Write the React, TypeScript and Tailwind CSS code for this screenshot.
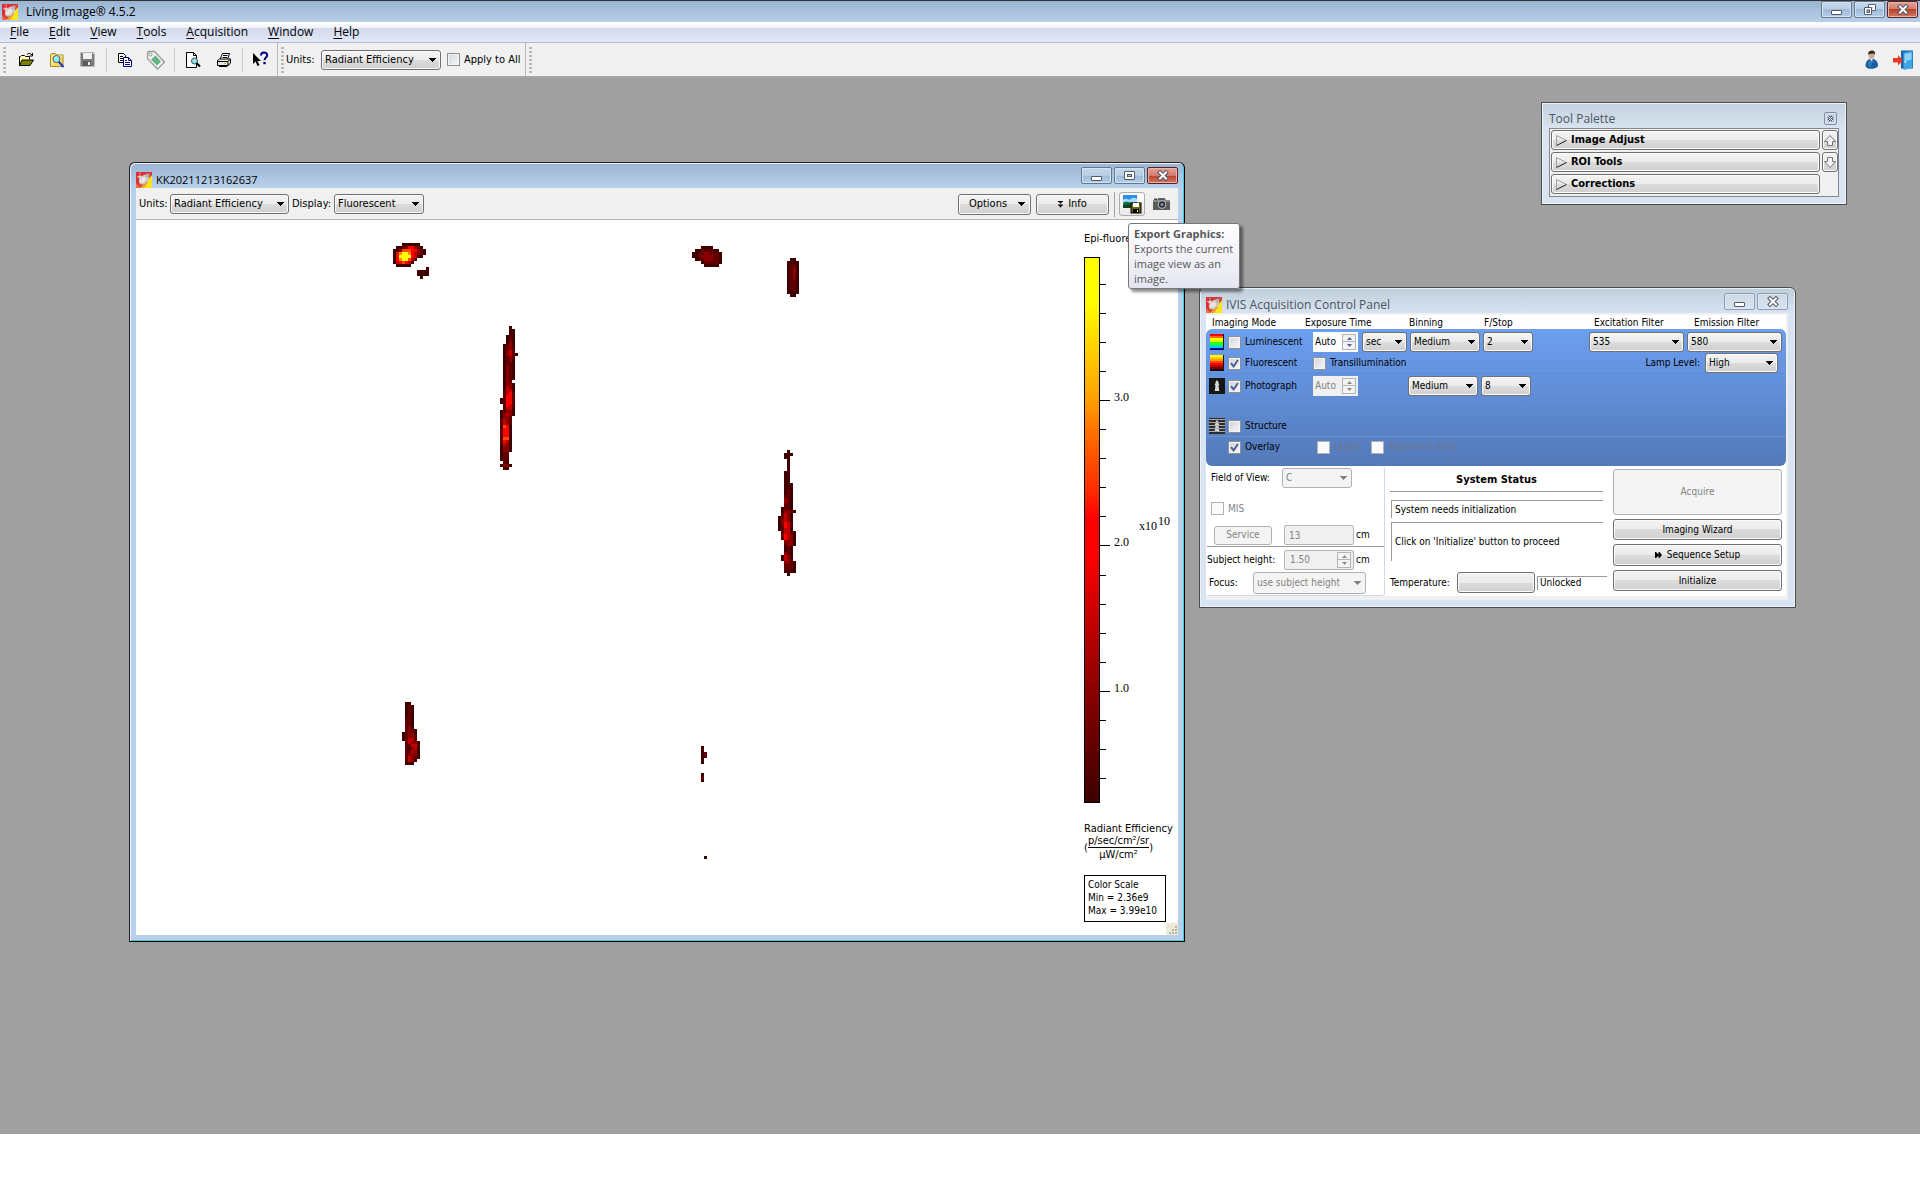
import React, { useId, useState } from 'react';

const UI = "font-['DejaVu_Sans_Condensed','DejaVu_Sans',sans-serif] text-[10px] leading-[12px]";
const TITLE = "font-['Open_Sans','Noto_Sans',sans-serif]";
const FACE =
  'rounded-[3px] border border-[#707070] bg-[linear-gradient(#f3f3f3,#ebebeb_50%,#dcdcdc_50%,#cfcfcf)] shadow-[inset_0_0_0_1px_#fbfbfb]';
const FACE_OFF = 'rounded-[3px] border border-[#adb2b5] bg-[#f4f4f4] text-[#838383]';

/* ---------- controls ---------- */

function Select({
  label,
  options,
  width,
  height = 'h-[20px]',
  disabled,
}: {
  label: string;
  options: string[];
  width: string;
  height?: string;
  disabled?: boolean;
}) {
  return (
    <span className={`relative block shrink-0 ${width} ${height}`}>
      <select
        aria-label={label}
        disabled={disabled}
        className={`block h-full w-full appearance-none pl-[3px] pr-4 opacity-100 ${disabled ? FACE_OFF : `${FACE} text-black`}`}
      >
        {options.map((o) => (
          <option key={o}>{o}</option>
        ))}
      </select>
      <svg
        className="pointer-events-none absolute right-[5px] top-1/2 -mt-[2px]"
        width="7"
        height="4"
        viewBox="0 0 7 4"
        shapeRendering="crispEdges"
      >
        <path d="M0 0h7v1h-1v1h-1v1h-1v1h-1v-1h-1v-1h-1v-1h-1z" fill={disabled ? '#838383' : '#000'} />
      </svg>
    </span>
  );
}

function Check({
  label,
  checked = false,
  disabled,
  faint,
}: {
  label: string;
  checked?: boolean;
  disabled?: boolean;
  faint?: boolean;
}) {
  const id = useId();
  const [on, setOn] = useState(checked);
  return (
    <span className="flex items-center gap-[4px]">
      <span className="relative block size-[13px]">
        <input
          id={id}
          type="checkbox"
          checked={on}
          disabled={disabled}
          onChange={() => setOn(!on)}
          className={`block size-[13px] appearance-none border ${
            disabled
              ? 'border-[#b1b1b1] bg-[#fbfbfb]'
              : 'border-[#8e8f8f] bg-[linear-gradient(135deg,#cfd3d9,#f8f8f8)] shadow-[inset_0_0_0_1px_#f4f4f4]'
          }`}
        />
        {on && (
          <svg className="pointer-events-none absolute left-[2px] top-[2px]" width="9" height="9" viewBox="0 0 9 9">
            <path d="M1 4.2L3.6 7.4L8 1" fill="none" stroke="#4b5f97" strokeWidth="1.9" />
          </svg>
        )}
      </span>
      <label htmlFor={id} className={faint ? 'text-[#6e7689]' : disabled ? 'text-[#838383]' : ''}>
        {label}
      </label>
    </span>
  );
}

function Spin({
  label,
  value,
  width,
  disabled,
  framed,
}: {
  label: string;
  value: string;
  width: string;
  disabled?: boolean;
  framed?: boolean;
}) {
  const mark = disabled ? '#8c8c8c' : '#4a63a5';
  return (
    <span
      className={`flex h-[20px] shrink-0 items-center pr-[2px] ${width} ${
        disabled ? 'bg-[#f0f0f0] text-[#838383]' : 'bg-white text-black'
      } ${framed ? 'rounded-[2px] border border-[#b0b4b8] pl-[3px]' : ''}`}
    >
      <input
        aria-label={label}
        defaultValue={value}
        disabled={disabled}
        className="min-w-0 flex-1 bg-transparent pl-[2px] outline-none"
      />
      <span className="flex w-[14px] flex-col">
        {[0, 1].map((i) => (
          <button
            key={i}
            aria-label={`${label} ${i ? 'down' : 'up'}`}
            disabled={disabled}
            className={`flex h-[8px] items-center justify-center border border-[#b4b4b4] bg-[#f3f3f3] ${i ? 'border-t-0' : ''}`}
          >
            <svg width="5" height="3" viewBox="0 0 5 3">
              <path d={i ? 'M0 0h5L2.5 3z' : 'M0 3h5L2.5 0z'} fill={mark} />
            </svg>
          </button>
        ))}
      </span>
    </span>
  );
}

function PushButton({
  children,
  className,
  disabled,
}: {
  children?: React.ReactNode;
  className: string;
  disabled?: boolean;
}) {
  return (
    <button
      disabled={disabled}
      className={`flex items-center justify-center ${disabled ? FACE_OFF : `${FACE} text-black`} ${className}`}
    >
      {children}
    </button>
  );
}

function CaptionButton({ kind, tone }: { kind: 'min' | 'restore' | 'max' | 'close'; tone: 'blue' | 'pale' | 'red' }) {
  const face =
    tone === 'red'
      ? 'border-[#5a1f25] bg-[linear-gradient(#e3a499,#d17a6b_50%,#bb4027_50%,#cf7a63)] shadow-[inset_0_0_0_1px_#e8b5ab]'
      : tone === 'blue'
        ? 'border-[#63788f] bg-[linear-gradient(#c6d8ea,#b7cde4_50%,#9dbad8_50%,#b5cfe9)] shadow-[inset_0_0_0_1px_#d5e4f3]'
        : 'border-[#8e9db5] bg-[linear-gradient(#ccd8e4,#d8e4f0)] shadow-[inset_0_0_0_1px_#dce7f1]';
  return (
    <button aria-label={kind} className={`flex h-[17px] w-[31px] items-center justify-center rounded-[2px] border ${face}`}>
      <svg width="14" height="13" viewBox="0 0 14 13">
        {kind === 'min' && <rect x="1.5" y="7.5" width="10" height="4" rx="0.5" fill="#fff" stroke="#535666" />}
        {kind === 'max' && (
          <g fill="#fff" stroke="#535666">
            <rect x="1.5" y="2.5" width="10" height="8" rx="0.5" />
            <rect x="4.5" y="5.5" width="4" height="2" fill="#a9c2dd" />
          </g>
        )}
        {kind === 'restore' && (
          <g fill="#fff" stroke="#535666">
            <rect x="5.5" y="1.5" width="7" height="6" rx="0.5" />
            <rect x="8" y="4" width="2" height="1.5" fill="#a9c2dd" stroke="none" />
            <rect x="1.5" y="4.5" width="7" height="7" rx="0.5" />
            <rect x="4" y="7" width="2.5" height="2.5" fill="#a9c2dd" />
          </g>
        )}
        {kind === 'close' && (
          <g fill="none" strokeLinecap="square">
            <path d="M4 3.5L10 9.5M10 3.5L4 9.5" stroke="#535666" strokeWidth="4" />
            <path d="M4 3.5L10 9.5M10 3.5L4 9.5" stroke="#fff" strokeWidth="2" />
          </g>
        )}
      </svg>
    </button>
  );
}

function AppIcon() {
  return (
    <svg width="16" height="16" viewBox="0 0 16 16" className="shrink-0">
      <rect width="16" height="16" fill="#dc2f33" />
      <path d="M16 3V16H4L10 10z" fill="#f9e420" />
      <path d="M0 11L5 16H0z" fill="#ee6a4a" />
      <path d="M5 16L10 10l2 0-4 6z" fill="#f59a2a" />
      <ellipse cx="8" cy="7.500" rx="6" ry="4" transform="rotate(-42 8 7.500)" fill="#cfc7c2" />
      <ellipse cx="7" cy="8" rx="3.500" ry="2.200" transform="rotate(-42 7 8)" fill="#e9e5e2" />
      <circle cx="4" cy="5" r="1.800" fill="#dcd5d1" />
      <circle cx="11.500" cy="3.500" r="2" fill="#b9b0ab" />
      <path d="M12 2.500l3-1.500M10.500 9.500l1.500 1.500M5 12l-1 1.500" stroke="#a59c97" strokeWidth="0.800" />
      <path d="M3 1l2 1M1 4l1 1" stroke="#f3b0a6" strokeWidth="0.800" />
    </svg>
  );
}

/* ---------- main toolbar icons ---------- */

const OpenIcon = () => (
  <svg width="16" height="16" viewBox="0 0 16 16">
    <path d="M1.500 13.500v-9h1l1-1h3l1 1h4v3" fill="#ffffb0" stroke="#000" />
    <path d="M1.500 13.500L4 8h11.500L12 13.500z" fill="#808000" stroke="#000" />
    <path d="M9 2.500c1.500-1.500 3.500-1.500 5 .5M14.500 1v3h-3" fill="none" stroke="#000" />
  </svg>
);
const BrowseIcon = () => (
  <svg width="16" height="16" viewBox="0 0 16 16">
    <path d="M1.500 14.500v-12l1-1h4l1 1.500h6.500v11.500z" fill="#f7dc6a" stroke="#a88a1c" />
    <path d="M3 13.500V4h10" fill="none" stroke="#fff3b5" />
    <path d="M9.500 9.500L14.500 15" stroke="#1b36c9" strokeWidth="2" />
    <circle cx="7.500" cy="7" r="3.500" fill="#8ff2ff" stroke="#5a5a5a" />
  </svg>
);
const SaveIcon = () => (
  <svg width="15" height="15" viewBox="0 0 15 15">
    <rect x="0.500" y="0.500" width="14" height="14" fill="#7c7c7c" />
    <rect x="3" y="1" width="9" height="6" fill="#f0f0f0" />
    <rect x="3" y="9" width="8" height="5" fill="#5c5c5c" />
    <rect x="8" y="10" width="2" height="3" fill="#f0f0f0" />
    <rect x="13" y="1" width="1" height="1" fill="#fff" />
  </svg>
);
const CopyIcon = () => (
  <svg width="16" height="16" viewBox="0 0 16 16">
    <path d="M1.500 1.500h5l2 2v7h-7z" fill="#fff" stroke="#000" />
    <path d="M3 4.500h3M3 6.500h4M3 8.500h3" stroke="#000" />
    <path d="M6.500 5.500h5l3 3v6h-8z" fill="#fff" stroke="#000080" />
    <path d="M11.500 5.500v3h3M8 8.500h2M8 10.500h5M8 12.500h5" stroke="#000080" fill="none" />
  </svg>
);
const TagIcon = () => (
  <svg width="20" height="20" viewBox="0 0 20 20">
    <path d="M1.500 2.500l1-1h6l10 10.500-7 7-10-10.500z" fill="#f3f3f3" stroke="#9a9a9a" strokeWidth="1.300" />
    <circle cx="4.500" cy="4.500" r="1.500" fill="#fff" stroke="#8a8a8a" />
    <path d="M9.500 5.500l5.500 6-4 4-6-6z" fill="#5fb57e" />
  </svg>
);
const PreviewIcon = () => (
  <svg width="16" height="16" viewBox="0 0 16 16">
    <path d="M1.500 .5h7l3 3v12h-10z" fill="#fff" stroke="#000" />
    <path d="M8.500 .5v3h3" fill="none" stroke="#000" />
    <circle cx="9.500" cy="9" r="3" fill="#7fe9f2" stroke="#4a4a4a" />
    <path d="M11.500 11L15 14.500" stroke="#000" strokeWidth="2" />
  </svg>
);
const PrintIcon = () => (
  <svg width="16" height="16" viewBox="0 0 16 16">
    <path d="M4 7.500L6.500 1.500h7L11.500 7.500" fill="#fff" stroke="#000" />
    <path d="M7 3.500h4.500M6.500 5.500h4.500" stroke="#000" />
    <path d="M1.500 8.500l2-1.500h11v4l-2.500 2.500H1.500z" fill="#e8e8e8" stroke="#000" />
    <path d="M1.500 9.500h10.500l2.500-2.500M12 9.500v4M3 14.500h8l2-2" fill="none" stroke="#000" />
    <path d="M8 11.500h2" stroke="#c8b400" />
  </svg>
);
const HelpPointerIcon = () => (
  <svg width="17" height="17" viewBox="0 0 17 17">
    <path d="M1 2v11l2.500-2.500L5.500 15l2-1-2-4H9z" fill="#000" />
    <path d="M9 4.500c0-2 1.300-3 3-3s3.200 1 3.200 2.800c0 2.200-2.700 2.200-2.700 5" fill="none" stroke="#000080" strokeWidth="2" />
    <rect x="11.300" y="11" width="2.400" height="2.200" fill="#000080" />
  </svg>
);
const UserIcon = () => (
  <svg width="16" height="20" viewBox="0 0 16 20">
    <path d="M1.500 16c0-4 2-6.500 4-7h4c2.500.500 4.500 3 4.500 7-1 3-11 4.500-12.500 0z" fill="#1d5f9e" />
    <path d="M4 15c0-3 1-4.500 3-5l4 1c-3 1-4 3-4 7z" fill="#2f7dbd" />
    <ellipse cx="7.500" cy="5" rx="3" ry="4" fill="#caa98d" />
    <path d="M4 4.500c0-3 2-4 4-4 2.500 0 3.500 2 3 4.500l-1-1.500c-2 .3-4 .3-6 1z" fill="#33291f" />
    <path d="M6 9h3l-1.500 2z" fill="#fff" />
  </svg>
);
const DoorIcon = () => (
  <svg width="20" height="20" viewBox="0 0 20 20">
    <path d="M8 .5h12v18h-12z" fill="#1565a8" />
    <path d="M10.500 2.500L19.500 1v17l-9 2z" fill="#3da5e8" />
    <path d="M11.500 4L18.500 2.500v7l-7 2z" fill="#8fd3f7" />
    <circle cx="12.300" cy="12" r="0.900" fill="#e8f4fb" />
    <path d="M0 8h5V5l5 5.500-5 5v-3H0z" fill="#e53a25" />
  </svg>
);

function ToolButton({ label, children }: { label: string; children: React.ReactNode }) {
  return (
    <button aria-label={label} className="flex h-[28px] w-[31px] items-center justify-center">
      {children}
    </button>
  );
}
const Separator = () => <span className="ml-[3px] mr-[2px] h-[24px] w-px bg-[#cdcdcd]" />;
const Handle = () => (
  <span className="h-[27px] w-[3px] shrink-0 bg-[radial-gradient(circle,#b0b0b0_1px,transparent_1.5px)] bg-[length:3px_4px]" />
);

/* ---------- heat map data ---------- */

const HEAT: Record<string, string> = {
  a: '#400000',
  b: '#600000',
  c: '#8a0000',
  d: '#c00000',
  e: '#ff0000',
  f: '#ff4800',
  g: '#ff8c00',
  h: '#ffff00',
};
const CELL = 3;

const SPOTS: { x: number; y: number; rows: string[] }[] = [
  {
    x: 257,
    y: 23,
    rows: ['...aaaaaa', '.aabceecba', 'aacfffeecba', 'aeghhgedcba', 'aehhhhedaa', 'aeghhfdb', 'adefeda', '.aaaaa'],
  },
  { x: 281, y: 47, rows: ['...a', 'aaaa', 'aaaa', '.a'] },
  {
    x: 364,
    y: 106,
    rows: [
      '...a', '...aa', '...aa', '..aba', '..aba', '..aca', '.abca', '.abcb', '.acdb', '.acdba', '.abcb', '.abca',
      '.abba', '.acba', '.acba', '.acba', '.acba', '.acba', '.acb', '.acca', '.adca', '.bdda', '.bdeb', '.beeb',
      'abeeb', 'abeeb', '.bedb', '.bdda', 'abcca', 'acdca', 'accb', 'bdcb', 'bdcb', 'bfea', 'beea', 'beea',
      'beea', 'bffa', 'beda', 'adca', 'acca', 'acca', 'abb', 'abb', 'abb', '.ba', 'acca', '.aa',
    ],
  },
  {
    x: 556,
    y: 26,
    rows: ['...aaaa', '.aabbbbaa', 'aabbccbbba', 'aabccccbba', '.abbcccbba', '...abbbbba', '....aaaaa'],
  },
  {
    x: 651,
    y: 38,
    rows: ['.aa', 'aaaa', 'abba', 'abca', 'abca', 'abca', 'abca', 'abba', 'abba', 'abba', 'abba', 'aaaa', '.aa'],
  },
  {
    x: 642,
    y: 230,
    rows: [
      '...a', '..aaa', '..aa', '...a', '...a', '...a', '...a', '..aa', '..aa', '..aa', '..aa', '..aaa', '..aaa',
      '..aba', '..aba', '..bba', '..cba', '..cba', '..bba', '.abba', '.accba', '.bdca', 'abdca', 'acdca', 'acedb',
      'abedb', 'abdda', '.bddba', '.cedca', '.bedca', '..ccca', '..bcca', '..aba', '..aba', '..cba', '.adca', '.adcb',
      '..ccba', '..bbba', '..bbba', '..aaaa', '...a',
    ],
  },
  {
    x: 266,
    y: 482,
    rows: [
      '.aa', '.aba', '.aba', '.aba', '.aba', '.bba', '.bba', '.bba', '.bca', '.bcba', 'abcca', 'abccb', 'abddb',
      '.bdcca', '.bbddb', '.bacda', '.bbdca', '.bccca', '.bdcba', '.bdca', '.aaa',
    ],
  },
  { x: 565, y: 526, rows: ['a', 'a', 'ab', 'ab', 'a', 'a'] },
  { x: 565, y: 553, rows: ['a', 'b', 'a'] },
  { x: 568, y: 636, rows: ['a'] },
];

function HeatMap() {
  return (
    <svg className="w-[948px] shrink-0" height="700" viewBox="0 0 948 700" shapeRendering="crispEdges" role="img" aria-label="Signal map">
      {SPOTS.map((s) =>
        s.rows.flatMap((row, r) =>
          row
            .split('')
            .map((ch, c) =>
              ch === '.' ? null : (
                <rect
                  key={`${s.x}-${s.y}-${r}-${c}`}
                  x={s.x + c * CELL}
                  y={s.y + r * CELL}
                  width={CELL}
                  height={CELL}
                  fill={HEAT[ch]}
                />
              ),
            ),
        ),
      )}
    </svg>
  );
}

const MINOR = [28, 57, 86, 115, 173, 202, 231, 260, 319, 348, 377, 406, 464, 493, 522];
const MAJOR: [number, string][] = [
  [144, '3.0'],
  [289, '2.0'],
  [435, '1.0'],
];

function ColorBar() {
  return (
    <svg
      width="90"
      height="548"
      viewBox="0 0 90 548"
      className="mt-[11px] block font-['Liberation_Serif',serif] text-[12px]"
      role="img"
      aria-label="Color bar"
    >
      <defs>
        <linearGradient id="scale" x1="0" y1="0" x2="0" y2="1">
          <stop offset="0.08" stopColor="#ffff00" />
          <stop offset="0.26" stopColor="#ffa000" />
          <stop offset="0.32" stopColor="#ff7000" />
          <stop offset="0.42" stopColor="#ff3000" />
          <stop offset="0.48" stopColor="#ff0000" />
          <stop offset="0.54" stopColor="#ff0000" />
          <stop offset="0.8" stopColor="#880000" />
          <stop offset="1" stopColor="#3c0000" />
        </linearGradient>
      </defs>
      <rect x="0.500" y="1.500" width="15" height="545" fill="url(#scale)" stroke="#000" />
      <g stroke="#000" shapeRendering="crispEdges">
        {MINOR.map((y) => (
          <path key={y} d={`M16 ${y + 0.5}h6`} />
        ))}
        {MAJOR.map(([y]) => (
          <path key={y} d={`M16 ${y + 0.5}h10`} />
        ))}
      </g>
      {MAJOR.map(([y, t]) => (
        <text key={t} x="30" y={y + 1}>
          {t}
        </text>
      ))}
      <text x="55" y="274">
        x10
      </text>
      <text x="74" y="269">
        10
      </text>
    </svg>
  );
}

function Legend() {
  return (
    <div className="flex flex-1 flex-col items-start whitespace-nowrap pt-[13px] text-[11px]">
      <p>Epi-fluorescence</p>
      <ColorBar />
      <p className="mt-[19px]">Radiant Efficiency</p>
      <div className="flex items-center">
        <span>(</span>
        <span className="flex flex-col items-center">
          <span className="border-b border-black leading-[12px]">p/sec/cm²/sr</span>
          <span className="leading-[13px]">µW/cm²</span>
        </span>
        <span>)</span>
      </div>
      <div className="mt-[14px] h-[47px] w-[82px] border border-black pl-[3px] pt-[2px] text-[10px] leading-[13px]">
        <p>Color Scale</p>
        <p>Min = 2.36e9</p>
        <p>Max = 3.99e10</p>
      </div>
    </div>
  );
}

/* ---------- windows ---------- */

function ImageWindow() {
  return (
    <section className="absolute left-[129px] top-[85px] flex h-[780px] w-[1056px] flex-col rounded-t-[6px] border border-b-black border-l-[#202020] border-r-black border-t-[#202020] bg-[linear-gradient(#9ab4d2,#b8d0ea_24px)] shadow-[inset_1px_1px_0_#eaf2fa,inset_-1px_-1px_0_#35cfe0]">
      <header className={`flex h-[25px] items-end gap-[4px] px-[6px] text-[11px] ${TITLE}`}>
        <AppIcon />
        <h2 className="flex-1 leading-[16px]">KK20211213162637</h2>
        <span className="flex gap-[2px] self-start pt-[4px]">
          <CaptionButton kind="min" tone="blue" />
          <CaptionButton kind="max" tone="blue" />
          <CaptionButton kind="close" tone="red" />
        </span>
      </header>
      <div className="relative mx-[6px] mb-[6px] flex flex-1 flex-col bg-white">
        <div className="flex h-[32px] items-center border-b border-[#b4b4b4] bg-[#f0f0f0] pl-[3px] pr-[5px] pt-px text-[11px]">
          <span className="w-[31px]">Units:</span>
          <Select label="Units" options={['Radiant Efficiency']} width="w-[119px]" />
          <span className="ml-[3px] w-[42px]">Display:</span>
          <Select label="Display" options={['Fluorescent']} width="w-[90px]" />
          <PushButton className="relative ml-auto h-[21px] w-[73px] pr-[13px]">
            Options
            <svg className="absolute right-[5px] top-[7px]" width="7" height="4" shapeRendering="crispEdges">
              <path d="M0 0h7v1h-1v1h-1v1h-1v1h-1v-1h-1v-1h-1v-1h-1z" />
            </svg>
          </PushButton>
          <PushButton className="ml-[5px] h-[21px] w-[73px] gap-[5px]">
            <svg width="5" height="7" viewBox="0 0 5 7">
              <path d="M0 0h5v1H4L2.500 3 1 1H0zM0 3.500h5v1H4L2.500 6.800 1 4.500H0z" />
            </svg>
            Info
          </PushButton>
          <span className="ml-[5px] mr-[4px] h-[25px] w-px bg-[#a8a8a8]" />
          <button
            aria-label="Export Graphics"
            className="flex h-[24px] w-[26px] items-center justify-center rounded-[3px] border border-[#adadad] bg-[linear-gradient(#fff,#e8e8e8)]"
          >
            <svg width="20" height="20" viewBox="0 0 20 20">
              <rect x="1" y="1" width="14" height="13" fill="#2f8fe8" />
              <path d="M1 6c3-3 6 1 8-1s4-1 6 0v4H1z" fill="#a6dcff" />
              <path d="M1 9c4-3 7 1 14-1v6H1z" fill="#16703a" />
              <path d="M1 12l5-2 5 2v2H1z" fill="#0a4424" />
              <rect x="9" y="9" width="10" height="10" fill="#6e6a00" stroke="#000" />
              <rect x="11" y="9" width="6" height="4" fill="#fff" />
              <rect x="11" y="15" width="6" height="4" fill="#000" />
              <rect x="15" y="16" width="1" height="2" fill="#fff" />
            </svg>
          </button>
          <button aria-label="Snapshot" className="ml-[4px] flex size-[24px] items-center justify-center">
            <svg width="17" height="14" viewBox="0 0 17 14">
              <path d="M0 3h4l1.500-2h6L13 3h4v10H0z" fill="#5b5b5b" />
              <path d="M0 3h17v2H0z" fill="#8a8a8a" />
              <path d="M1 1.500h3V3H1z" fill="#444" />
              <circle cx="9" cy="7.500" r="4.300" fill="#b9b9b9" />
              <circle cx="9" cy="7.500" r="3.200" fill="#2b2f3a" />
              <circle cx="9" cy="7.500" r="1.500" fill="#7d93b8" />
            </svg>
          </button>
        </div>
        <div className="flex flex-1">
          <HeatMap />
          <Legend />
        </div>
        <svg className="absolute bottom-0 right-0 bg-[#ece9d8]" width="12" height="12" viewBox="0 0 12 12" fill="#b8b4a2">
          <path d="M9 3h2v2H9zM6 6h2v2H6zM9 6h2v2H9zM3 9h2v2H3zM6 9h2v2H6zM9 9h2v2H9z" />
        </svg>
        <div
          role="tooltip"
          className={`absolute left-[992px] top-[35px] w-[112px] rounded-[3px] border border-[#767676] bg-[linear-gradient(#fff,#e4e5f0)] py-[2px] pl-[5px] text-[11px] leading-[15px] text-[#575757] shadow-[3px_3px_3px_rgba(0,0,0,0.45)] ${TITLE}`}
        >
          <b>Export Graphics:</b>
          <br />
          Exports the current
          <br />
          image view as an
          <br />
          image.
        </div>
      </div>
    </section>
  );
}

function ToolPalette() {
  return (
    <section className="absolute right-[73px] top-[25px] w-[306px] border border-[#4c4c4c] bg-[linear-gradient(#c3d0dd,#d9e4f1_26px)] px-[7px] pb-[7px] shadow-[inset_0_0_0_1px_#eef3f9]">
      <header className={`flex h-[25px] items-end justify-between pr-[2px] text-[#4d5560] ${TITLE}`}>
        <h2 className="text-[12px] leading-[18px]">Tool Palette</h2>
        <button
          aria-label="Close Tool Palette"
          className="mb-[3px] flex size-[13px] items-center justify-center rounded-[2px] border border-[#7c8db0] bg-[#d5dfec]"
        >
          <svg width="9" height="9" viewBox="0 0 9 9">
            <path d="M2 2L7 7M7 2L2 7" stroke="#535666" strokeWidth="2.600" />
            <path d="M2 2L7 7M7 2L2 7" stroke="#fff" strokeWidth="1" />
          </svg>
        </button>
      </header>
      <div className="flex gap-[2px] border border-[#828790] bg-[#f0f0f0] pb-[2px] pl-px pt-px">
        <div className="flex flex-1 flex-col gap-[2px]">
          {['Image Adjust', 'ROI Tools', 'Corrections'].map((t) => (
            <button key={t} className={`flex h-[20px] items-center gap-[4px] pl-[4px] text-[11px] font-bold text-black ${FACE}`}>
              <svg width="11" height="11" viewBox="0 0 11 11" fill="none">
                <path d="M.5 10.500V.5" stroke="#a0a0a0" />
                <path d="M.5.500L10.500 5.500" stroke="#a0a0a0" />
                <path d="M10.500 5.500L.5 10.500" stroke="#222" />
              </svg>
              {t}
            </button>
          ))}
        </div>
        <div className="flex w-[16px] flex-col gap-[2px]">
          {[0, 1].map((i) => (
            <button key={i} aria-label={i ? 'Scroll down' : 'Scroll up'} className={`flex h-[20px] items-center justify-center ${FACE}`}>
              <svg width="12" height="11" viewBox="0 0 12 11" fill="none">
                <path
                  d={i ? 'M3.500.500h5v4h3L6 10.500 .5 4.500h3z' : 'M3.500 10.500h5v-4h3L6 .5 .5 6.500h3z'}
                  fill="#f4f4f4"
                  stroke="#777"
                />
              </svg>
            </button>
          ))}
        </div>
      </div>
    </section>
  );
}

function ModeIcon({ kind }: { kind: 'lum' | 'fluo' | 'photo' | 'struct' }) {
  if (kind === 'lum' || kind === 'fluo') {
    const bands =
      kind === 'lum'
        ? ['#f00', '#f60', '#ff0', '#cf0', '#3f0', '#0f6', '#0cf', '#00f']
        : ['#ff0', '#fc0', '#f90', '#f40', '#f00', '#b00', '#700', '#300'];
    return (
      <svg width="14" height="16" viewBox="0 0 14 16" shapeRendering="crispEdges">
        {bands.map((c, i) => (
          <rect key={c} y={i * 2} width="13" height="2" fill={c} />
        ))}
        <path d="M13 0h1v16h-14v-1h13z" fill="#111" />
      </svg>
    );
  }
  return (
    <svg width="16" height="16" viewBox="0 0 16 16">
      <rect width="16" height="16" fill={kind === 'photo' ? '#151515' : '#2c2c2c'} />
      <path d="M8 2l1.500 2v1.500L10.500 7l-1 .5.500 4 .5 1.500H5.500l.5-1.500.500-4-1-.5 1-1.500V4z" fill="#d9d9d9" />
      {kind === 'struct' && <path d="M0 1.500h16M0 4.500h16M0 7.500h16M0 10.500h16M0 13.500h16" stroke="#a9a9a9" />}
    </svg>
  );
}

function ModeCell({ icon, children }: { icon?: 'lum' | 'fluo' | 'photo' | 'struct'; children: React.ReactNode }) {
  return (
    <span className="flex w-[107px] shrink-0 items-center">
      <span className="flex w-[22px] justify-center pr-px">{icon && <ModeIcon kind={icon} />}</span>
      {children}
    </span>
  );
}

function ControlPanel() {
  return (
    <section className="absolute left-[1199px] top-[210px] w-[597px] rounded-t-[6px] border border-[#4c4c4c] bg-[linear-gradient(#c0cddb,#d8e4f1_26px)] pb-[7px] pl-[6px] pr-[7px] text-black shadow-[inset_0_0_0_1px_#eaf1f8]">
      <header className={`flex h-[25px] items-end gap-[4px] text-[#4d5560] ${TITLE}`}>
        <AppIcon />
        <h2 className="flex-1 text-[12px] leading-[16px]">IVIS Acquisition Control Panel</h2>
        <span className="flex gap-[2px] self-start pt-[5px]">
          <CaptionButton kind="min" tone="pale" />
          <CaptionButton kind="close" tone="pale" />
        </span>
      </header>
      <div className="border-b-4 border-r-2 border-t-2 border-[#f0f0f0] bg-white">
        <div className="flex h-[14px] items-end pl-[6px]">
          <span className="w-[93px]">Imaging Mode</span>
          <span className="w-[104px]">Exposure Time</span>
          <span className="w-[75px]">Binning</span>
          <span className="flex-1">F/Stop</span>
          <span className="w-[100px]">Excitation Filter</span>
          <span className="w-[92px]">Emission Filter</span>
        </div>

        <div className="rounded-[6px] bg-[linear-gradient(#6c9ff0,#5379b9)] pb-[9px] pt-[2px]">
          <div className="flex h-[22px] items-center pr-[4px]">
            <ModeCell icon="lum">
              <Check label="Luminescent" />
            </ModeCell>
            <Spin label="Exposure time" value="Auto" width="w-[45px]" />
            <span className="ml-[4px] flex gap-[3px]">
              <Select label="Exposure unit" options={['sec']} width="w-[45px]" />
              <Select label="Binning" options={['Medium']} width="w-[70px]" />
              <Select label="F/Stop" options={['2']} width="w-[50px]" />
            </span>
            <span className="ml-auto flex gap-[3px]">
              <Select label="Excitation Filter" options={['535']} width="w-[95px]" />
              <Select label="Emission Filter" options={['580']} width="w-[95px]" />
            </span>
          </div>
          <div className="flex h-[21px] items-center border-b border-[#5f8dd8] pr-[8px]">
            <ModeCell icon="fluo">
              <Check label="Fluorescent" checked />
            </ModeCell>
            <Check label="Transillumination" />
            <span className="ml-auto mr-[5px]">Lamp Level:</span>
            <Select label="Lamp Level" options={['High']} width="w-[73px]" />
          </div>
          <div className="flex h-[24px] items-center">
            <ModeCell icon="photo">
              <Check label="Photograph" checked />
            </ModeCell>
            <Spin label="Photograph exposure" value="Auto" width="w-[45px]" disabled />
            <span className="ml-[50px] flex gap-[3px]">
              <Select label="Photograph binning" options={['Medium']} width="w-[70px]" />
              <Select label="Photograph F/Stop" options={['8']} width="w-[50px]" />
            </span>
          </div>
          <div className="mt-[18px] flex h-[21px] items-center border-b border-[#6b93d4]">
            <ModeCell icon="struct">
              <Check label="Structure" />
            </ModeCell>
          </div>
          <div className="flex h-[20px] items-center">
            <ModeCell>
              <Check label="Overlay" checked />
            </ModeCell>
            <span className="ml-[4px] flex gap-[10px]">
              <Check label="Lights" disabled faint />
              <Check label="Alignment Grid" disabled faint />
            </span>
          </div>
        </div>

        <div className="flex h-[130px]">
          <div className="flex w-[179px] shrink-0 flex-col rounded-[3px] border-b border-r border-[#cddae6] pl-px">
            <div className="flex items-center pl-[4px] pt-[2px]">
              <span className="w-[71px]">Field of View:</span>
              <Select label="Field of View" options={['C']} width="w-[70px]" disabled />
            </div>
            <div className="mt-[14px] flex pl-[4px]">
              <Check label="MIS" disabled />
            </div>
            <div className="mt-[10px] flex items-center gap-[2px] border-b border-[#9a9a9a] pb-px pl-[7px]">
              <PushButton disabled className="mr-[10px] h-[19px] w-[58px]">
                Service
              </PushButton>
              <input
                aria-label="Stage position"
                defaultValue="13"
                disabled
                className="h-[20px] w-[70px] rounded-[2px] border border-[#b0b4b8] bg-[#f0f0f0] pl-[4px] text-[#838383]"
              />
              cm
            </div>
            <div className="mt-[3px] flex items-center gap-[2px]">
              <span className="w-[75px]">Subject height:</span>
              <Spin label="Subject height" value="1.50" width="w-[70px]" disabled framed />
              cm
            </div>
            <div className="mt-[2px] flex items-center pl-[2px]">
              <span className="w-[44px]">Focus:</span>
              <Select label="Focus" options={['use subject height']} width="w-[113px]" height="h-[22px]" disabled />
            </div>
          </div>

          <div className="ml-[5px] flex flex-1 flex-col">
            <h3 className="mr-[4px] border-b border-[#9a9a9a] pb-[5px] pt-[8px] text-center text-[11px] font-bold">System Status</h3>
            <p className="ml-px mr-[4px] mt-[8px] h-[18px] border-l border-t border-[#9a9a9a] pl-[3px] pt-[3px]">
              System needs initialization
            </p>
            <p className="ml-px mr-[4px] mt-[4px] flex h-[39px] items-center border-l border-t border-[#9a9a9a] pl-[3px]">
              Click on 'Initialize' button to proceed
            </p>
            <div className="mt-[11px] flex items-center">
              <span className="w-[67px]">Temperature:</span>
              <PushButton className="h-[21px] w-[78px]" />
              <span className="ml-[2px] h-[14px] flex-1 border-l border-t border-[#9a9a9a] pl-[2px]">Unlocked</span>
            </div>
          </div>

          <div className="ml-[6px] mr-[4px] flex w-[169px] shrink-0 flex-col gap-[4px] pt-[3px]">
            <PushButton disabled className="h-[46px]">
              Acquire
            </PushButton>
            <PushButton className="h-[21px]">Imaging Wizard</PushButton>
            <PushButton className="h-[22px] gap-[5px]">
              <svg width="7" height="6" viewBox="0 0 7 6">
                <path d="M0 0h1l2.500 2.500V0h1L7 3 4.500 6h-1V3.500L1 6H0z" />
              </svg>
              Sequence Setup
            </PushButton>
            <PushButton className="h-[21px]">Initialize</PushButton>
          </div>
        </div>
      </div>
    </section>
  );
}

/* ---------- application frame ---------- */

const MENUS = ['File', 'Edit', 'View', 'Tools', 'Acquisition', 'Window', 'Help'];

export default function App() {
  return (
    <div className={`flex min-h-screen flex-col bg-white text-black ${UI}`}>
      <header className="flex h-[22px] items-center gap-[8px] border-t border-[#333] bg-[linear-gradient(#9ab4d2,#b7cfe8)] pl-[2px] pr-[2px]">
        <AppIcon />
        <h1 className={`flex-1 text-[12px] ${TITLE}`}>Living Image® 4.5.2</h1>
        <span className="mb-[4px] flex gap-[2px]">
          <CaptionButton kind="min" tone="blue" />
          <CaptionButton kind="restore" tone="blue" />
          <CaptionButton kind="close" tone="red" />
        </span>
      </header>

      <nav
        className={`flex h-[21px] items-center border-b border-[#b6bccc] bg-[linear-gradient(#fff,#f1f3fa_6px,#d3daed_6px,#e4e8f7)] text-[12px] ${TITLE}`}
      >
        {MENUS.map((m) => (
          <button key={m} className="h-full px-[10px]">
            <u className="underline-offset-2">{m[0]}</u>
            {m.slice(1)}
          </button>
        ))}
      </nav>

      <div className="flex h-[34px] items-center border-b border-[#a8a8a8] bg-[#f0f0f0] text-[11px]">
        <div className="flex h-full items-center border-r border-[#b8b8b8] pl-[3px] pr-px">
          <Handle />
          <span className="w-[4px]" />
          <ToolButton label="Open"><OpenIcon /></ToolButton>
          <ToolButton label="Browse"><BrowseIcon /></ToolButton>
          <ToolButton label="Save"><SaveIcon /></ToolButton>
          <Separator />
          <ToolButton label="Copy"><CopyIcon /></ToolButton>
          <ToolButton label="Tag"><TagIcon /></ToolButton>
          <Separator />
          <ToolButton label="Print preview"><PreviewIcon /></ToolButton>
          <ToolButton label="Print"><PrintIcon /></ToolButton>
          <Separator />
          <ToolButton label="Context help"><HelpPointerIcon /></ToolButton>
        </div>
        <div className="flex h-full items-center border-r border-[#b8b8b8] pl-[3px] pr-[5px]">
          <Handle />
          <span className="ml-[2px] w-[35px]">Units:</span>
          <Select label="Display units" options={['Radiant Efficiency']} width="w-[120px]" />
          <span className="ml-[6px]">
            <Check label="Apply to All" />
          </span>
        </div>
        <span className="ml-[3px] flex"><Handle /></span>
        <div className="ml-auto flex pr-[2px]">
          <ToolButton label="User"><UserIcon /></ToolButton>
          <ToolButton label="Exit"><DoorIcon /></ToolButton>
        </div>
      </div>

      <main className="relative flex-1 overflow-hidden bg-[#a0a0a0]">
        <ToolPalette />
        <ControlPanel />
        <ImageWindow />
      </main>
      <footer className="h-[66px] bg-white" />
    </div>
  );
}
